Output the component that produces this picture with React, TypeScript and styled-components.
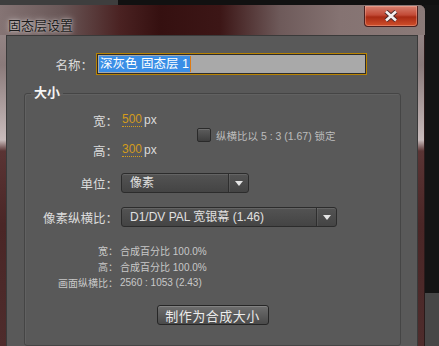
import styled, { createGlobalStyle } from "styled-components";

const GlobalStyle = createGlobalStyle`
  html, body {
    margin: 0;
    padding: 0;
    background: #121212;
  }
  body {
    font-family: "Liberation Sans", "Noto Sans CJK SC", sans-serif;
  }
`;

const CJK = `"Liberation Sans", "Noto Sans CJK SC", sans-serif`;

const Page = styled.div`
  width: 439px;
  height: 346px;
  overflow: hidden;
  display: grid;
  grid-template-columns: 425px 14px;
  grid-template-rows: 5px 341px;
`;

const TopStrip = styled.div`
  grid-column: 1 / 3;
  background: linear-gradient(to right, #3e3e3e 118px, #111 118px);
`;

const SideStrip = styled.div`
  background: linear-gradient(to bottom, #141414 288px, #474747 288px);
`;

const Window = styled.div`
  display: flex;
  flex-direction: column;
  padding: 0 7px 0 6px;
  border-radius: 0 6px 0 0;
  background: linear-gradient(
    to bottom,
    #9c8e8e 0,
    #8a7a7a 60px,
    #c9bcbc 135px,
    #5a3434 146px,
    #4a2626 220px,
    #4e2c2c 100%
  );
  box-shadow: inset -1px 0 0 #2a1a1a;
`;

const TitleBar = styled.div`
  height: 30px;
  display: flex;
  justify-content: space-between;
  align-items: flex-start;
  margin: 0 -7px 0 -6px;
  padding: 0 7px 0 8px;
  border-radius: 0 6px 0 0;
  background: linear-gradient(
    to right,
    #857474 0,
    #6a5858 60px,
    #4a2222 120px,
    #351010 160px,
    #3c1616 220px,
    #6e5a5a 280px,
    #857372 340px,
    #8a7a78 100%
  );
`;

const Title = styled.span`
  margin-top: 10px;
  font-family: ${CJK};
  font-size: 13px;
  color: #1c1c1c;
  text-shadow: 0 0 6px rgba(255, 255, 255, 0.75), 0 0 2px rgba(255, 255, 255, 0.5);
`;

const CloseButton = styled.div`
  margin-top: 1px;
  width: 52px;
  height: 20px;
  display: flex;
  align-items: center;
  justify-content: center;
  border: 1px solid #4a2020;
  border-top: none;
  border-radius: 0 0 4px 4px;
  background: linear-gradient(
    to bottom,
    #d88070 0,
    #c24a36 45%,
    #a82a14 55%,
    #d0502c 100%
  );
  box-shadow: inset 0 0 0 1px rgba(255, 200, 180, 0.35);
`;

const Client = styled.div`
  flex: 1;
  background: #595959;
  border: 1px solid #3a3a3a;
  border-bottom: none;
  display: flex;
  flex-direction: column;
  font-family: ${CJK};
  color: #dcdcdc;
`;

const NameRow = styled.div`
  display: flex;
  align-items: center;
  margin-top: 17px;
`;

const Label = styled.span<{ $w: number; $size?: number }>`
  width: ${(p) => p.$w}px;
  flex: none;
  text-align: right;
  font-size: ${(p) => p.$size ?? 12.5}px;
  white-space: nowrap;
`;

const NameInput = styled.div`
  margin-left: 3px;
  width: 271px;
  height: 22px;
  box-sizing: border-box;
  border: 1px solid #b98300;
  display: flex;
`;

const NameInner = styled.div`
  flex: 1;
  border: 1px solid #2c2c2c;
  background: #a9a9a9;
  display: flex;
  align-items: center;
  padding-left: 1px;
`;

const Selected = styled.span`
  background: #3a8ee6;
  color: #fff;
  font-size: 12.5px;
  line-height: 16px;
  padding: 0 1px;
  border-right: 1px solid #e07a10;
`;

const Group = styled.fieldset`
  margin: 10px 0 0 17px;
  padding: 9px 0 15px 0;
  width: 377px;
  box-sizing: border-box;
  border: 1px solid #454545;
  border-radius: 3px;
  box-shadow: inset 1px 1px 0 rgba(255, 255, 255, 0.05);
  flex: 1;
  min-width: 0;
  display: flex;
  flex-direction: column;
`;

const Legend = styled.legend`
  margin-left: 6px;
  padding: 0 3px;
  font-size: 13px;
  font-weight: bold;
  line-height: 16px;
  color: #f4f4f4;
`;

const SizeBlock = styled.div`
  display: flex;
  align-items: center;
`;

const SizeColumn = styled.div`
  width: 172px;
  display: flex;
  flex-direction: column;
  gap: 10px;
`;

const Row = styled.div<{ $gap?: number }>`
  display: flex;
  align-items: center;
  height: 20px;
  margin-top: ${(p) => p.$gap ?? 0}px;
`;

const Value = styled.span`
  margin-left: 4px;
  color: #d39b1c;
  font-size: 12px;
  border-bottom: 1px dotted #d39b1c;
  line-height: 13px;
`;

const Unit = styled.span`
  margin-left: 2px;
  font-size: 12px;
  color: #dcdcdc;
`;

const CheckLabel = styled.label`
  display: flex;
  align-items: center;
  gap: 5px;
  font-size: 10.5px;
  color: #bdbdbd;
  white-space: nowrap;
`;

const CheckBox = styled.span`
  width: 12px;
  height: 12px;
  border: 1px solid #2a2a2a;
  border-radius: 2px;
  background: linear-gradient(to bottom, #5c5c5c, #3e3e3e);
  box-shadow: inset 0 1px 0 rgba(255, 255, 255, 0.12);
`;

const Select = styled.div<{ $w: number }>`
  margin-left: 3px;
  width: ${(p) => p.$w}px;
  height: 20px;
  box-sizing: border-box;
  border: 1px solid #2c2c2c;
  border-radius: 3px;
  background: linear-gradient(to bottom, #535353, #444);
  box-shadow: inset 0 1px 0 rgba(255, 255, 255, 0.1);
  display: flex;
  align-items: stretch;
`;

const SelectText = styled.span`
  flex: 1;
  padding-left: 8px;
  font-size: 12px;
  line-height: 18px;
  color: #e0e0e0;
  white-space: nowrap;
`;

const SelectArrow = styled.span`
  width: 19px;
  display: flex;
  align-items: center;
  justify-content: center;
  border-left: 1px solid #2e2e2e;
  box-shadow: inset 1px 0 0 rgba(255, 255, 255, 0.08);
`;

const InfoList = styled.div`
  margin-top: 15px;
  display: flex;
  flex-direction: column;
`;

const InfoRow = styled.div`
  display: flex;
  align-items: center;
  height: 16px;
  font-size: 10px;
  color: #c8c8c8;
`;

const InfoValue = styled.span`
  margin-left: 2px;
  white-space: nowrap;
`;

const ButtonRow = styled.div`
  margin-top: 15px;
  display: flex;
  justify-content: center;
`;

const Button = styled.button`
  height: 20px;
  width: 112px;
  padding: 0;
  font-family: ${CJK};
  font-size: 13px;
  letter-spacing: 0.5px;
  color: #ececec;
  border: 1px solid #262626;
  border-radius: 3px;
  background: linear-gradient(to bottom, #6e6e6e, #4a4a4a);
  box-shadow: inset 0 1px 0 rgba(255, 255, 255, 0.15);
`;

const Arrow = () => (
  <svg width="8" height="5" viewBox="0 0 8 5">
    <polygon points="0,0 8,0 4,5" fill="#e4e4e4" />
  </svg>
);

const CloseIcon = () => (
  <svg width="16" height="12" viewBox="0 0 16 12">
    <path d="M3 1.5 L13 10.5 M13 1.5 L3 10.5" stroke="#4a2a2a" strokeWidth="4.5" />
    <path d="M3 1.5 L13 10.5 M13 1.5 L3 10.5" stroke="#f4f0f0" strokeWidth="2.6" />
  </svg>
);

const App = () => {
  return (
    <>
      <GlobalStyle />
      <Page>
        <TopStrip />
        <Window>
          <TitleBar>
            <Title>固态层设置</Title>
            <CloseButton>
              <CloseIcon />
            </CloseButton>
          </TitleBar>
          <Client>
            <NameRow>
              <Label $w={86}>名称：</Label>
              <NameInput>
                <NameInner>
                  <Selected>深灰色 固态层 1</Selected>
                </NameInner>
              </NameInput>
            </NameRow>

            <Group>
              <Legend>大小</Legend>
              <SizeBlock>
                <SizeColumn>
                  <Row>
                    <Label $w={93}>宽：</Label>
                    <Value>500</Value>
                    <Unit>px</Unit>
                  </Row>
                  <Row>
                    <Label $w={93}>高：</Label>
                    <Value>300</Value>
                    <Unit>px</Unit>
                  </Row>
                </SizeColumn>
                <CheckLabel>
                  <CheckBox />
                  纵横比以 5 : 3 (1.67) 锁定
                </CheckLabel>
              </SizeBlock>

              <Row $gap={13}>
                <Label $w={93}>单位：</Label>
                <Select $w={128}>
                  <SelectText>像素</SelectText>
                  <SelectArrow>
                    <Arrow />
                  </SelectArrow>
                </Select>
              </Row>

              <Row $gap={14}>
                <Label $w={93}>像素纵横比：</Label>
                <Select $w={216}>
                  <SelectText>D1/DV PAL 宽银幕 (1.46)</SelectText>
                  <SelectArrow>
                    <Arrow />
                  </SelectArrow>
                </Select>
              </Row>

              <InfoList>
                <InfoRow>
                  <Label $w={93} $size={10}>宽：</Label>
                  <InfoValue>合成百分比 100.0%</InfoValue>
                </InfoRow>
                <InfoRow>
                  <Label $w={93} $size={10}>高：</Label>
                  <InfoValue>合成百分比 100.0%</InfoValue>
                </InfoRow>
                <InfoRow>
                  <Label $w={93} $size={10}>画面纵横比：</Label>
                  <InfoValue>2560 : 1053 (2.43)</InfoValue>
                </InfoRow>
              </InfoList>

              <ButtonRow>
                <Button>制作为合成大小</Button>
              </ButtonRow>
            </Group>
          </Client>
        </Window>
        <SideStrip />
      </Page>
    </>
  );
};

export default App;
